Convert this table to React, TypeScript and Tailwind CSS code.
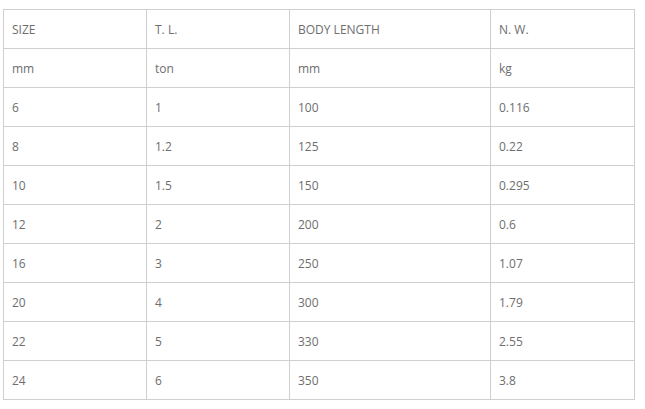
const rows: string[][] = [
  ["SIZE", "T. L.", "BODY LENGTH", "N. W."],
  ["mm", "ton", "mm", "kg"],
  ["6", "1", "100", "0.116"],
  ["8", "1.2", "125", "0.22"],
  ["10", "1.5", "150", "0.295"],
  ["12", "2", "200", "0.6"],
  ["16", "3", "250", "1.07"],
  ["20", "4", "300", "1.79"],
  ["22", "5", "330", "2.55"],
  ["24", "6", "350", "3.8"],
];

export default function App() {
  return (
    <div className="w-[645px] h-[409px] bg-white pt-[9px] pl-[3px] font-['Open_Sans',sans-serif]">
      <table className="table-fixed border-collapse w-[631px] text-[12px] text-[#6e6e6e]">
        <colgroup>
          <col className="w-[143px]" />
          <col className="w-[143px]" />
          <col className="w-[201px]" />
          <col className="w-[144px]" />
        </colgroup>
        <tbody>
          {rows.map((row, i) => (
            <tr key={i} className="h-[39px]">
              {row.map((cell, j) => (
                <td key={j} className="border border-[#cfcfcf] px-2 pt-[2px] align-middle">
                  {cell}
                </td>
              ))}
            </tr>
          ))}
        </tbody>
      </table>
    </div>
  );
}
